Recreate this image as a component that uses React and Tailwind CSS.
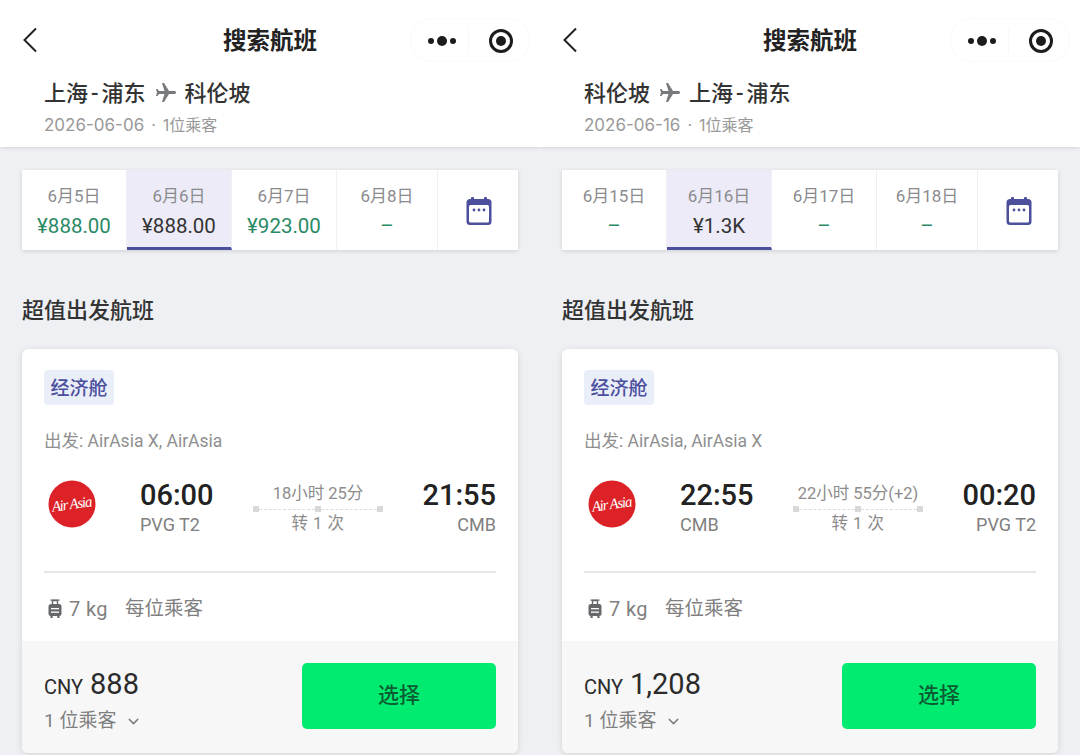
import React from 'react';
import { ChevronDown } from 'lucide-react';

const FONT = "font-['Roboto','Noto_Sans_CJK_SC',sans-serif]";

const panels = [
  {
    from: ['上海', '浦东'],
    to: ['科伦坡'],
    date: '2026-06-06',
    dates: [
      { label: '6月5日', price: '¥888.00', width: 'w-[105px]' },
      { label: '6月6日', price: '¥888.00', width: 'w-[105px]', active: true },
      { label: '6月7日', price: '¥923.00', width: 'w-[105px]' },
      { label: '6月8日', price: '–', width: 'w-[101px]' },
    ],
    carriers: '出发: AirAsia X, AirAsia',
    depart: '06:00',
    departCode: 'PVG T2',
    duration: '18小时 25分',
    arrive: '21:55',
    arriveCode: 'CMB',
    amount: '888',
  },
  {
    from: ['科伦坡'],
    to: ['上海', '浦东'],
    date: '2026-06-16',
    dates: [
      { label: '6月15日', price: '–', width: 'w-[105px]' },
      { label: '6月16日', price: '¥1.3K', width: 'w-[105px]', active: true },
      { label: '6月17日', price: '–', width: 'w-[105px]' },
      { label: '6月18日', price: '–', width: 'w-[101px]' },
    ],
    carriers: '出发: AirAsia, AirAsia X',
    depart: '22:55',
    departCode: 'CMB',
    duration: '22小时 55分(+2)',
    arrive: '00:20',
    arriveCode: 'PVG T2',
    amount: '1,208',
  },
];

const BackIcon = () => (
  <svg width="16" height="26" viewBox="0 0 16 26" fill="none" stroke="#222" strokeWidth="2">
    <path d="M14 1.5 L2.5 13 L14 24.5" />
  </svg>
);

const CapsuleMenu = () => (
  <div className="flex items-center w-[120px] h-[44px] pt-[1px] rounded-full border border-[#fafafa]">
    <div className="flex-1 flex items-center justify-center gap-[3px] pl-[4px]">
      <span className="w-[6px] h-[6px] rounded-full bg-[#1c1c1c]" />
      <span className="w-[10px] h-[10px] rounded-full bg-[#1c1c1c]" />
      <span className="w-[6px] h-[6px] rounded-full bg-[#1c1c1c]" />
    </div>
    <div className="w-px h-[24px] bg-[#f8f8f8]" />
    <div className="w-[60px] pl-[4px] flex items-center justify-center">
      <div className="w-[24px] h-[24px] rounded-full border-[3px] border-[#1c1c1c] flex items-center justify-center">
        <span className="w-[10px] h-[10px] rounded-full bg-[#1c1c1c]" />
      </div>
    </div>
  </div>
);

const PlaneIcon = () => (
  <svg width="24" height="24" viewBox="0 0 24 24" fill="#77797c">
    <path transform="rotate(90 12 12)" d="M21 16v-2l-8-5V3.5c0-.83-.67-1.5-1.5-1.5S10 2.67 10 3.5V9l-8 5v2l8-2.5V19l-2 1.5V22l3.5-1 3.5 1v-1.5L13 19v-5.5l8 2.5z" />
  </svg>
);

const CalendarIcon = () => (
  <svg width="26" height="28" viewBox="0 0 26 28">
    <rect x="5" y="0" width="3" height="5" rx="1" fill="#4b4f9c" />
    <rect x="18" y="0" width="3" height="5" rx="1" fill="#4b4f9c" />
    <rect x="0.5" y="2" width="25" height="26" rx="3.5" fill="#4b4f9c" />
    <rect x="3" y="8" width="20" height="17.5" rx="1.5" fill="#fff" />
    <circle cx="8" cy="13" r="1.4" fill="#4b4f9c" />
    <circle cx="13" cy="13" r="1.4" fill="#4b4f9c" />
    <circle cx="18" cy="13" r="1.4" fill="#4b4f9c" />
  </svg>
);

const AirAsiaLogo = () => (
  <svg width="48" height="48" viewBox="0 0 48 48">
    <circle cx="24" cy="24" r="23.5" fill="#dc2127" />
    <text
      x="24"
      y="29"
      textAnchor="middle"
      fill="#fff"
      fontSize="15"
      fontStyle="italic"
      fontFamily="'Liberation Serif', serif"
      textLength="41"
      transform="rotate(-8 24 24)"
    >
      Air Asia
    </text>
  </svg>
);

const LuggageIcon = () => (
  <svg width="14" height="20" viewBox="0 0 14 20">
    <path d="M4.5 5V1.5h5V5" fill="none" stroke="#66686b" strokeWidth="1.4" />
    <path d="M2.5 1.2h9" stroke="#66686b" strokeWidth="1.2" />
    <rect x="0.5" y="5" width="13" height="12" rx="2.5" fill="#66686b" />
    <rect x="3" y="9" width="8" height="1.3" fill="#fff" />
    <rect x="3" y="12.5" width="8" height="1.3" fill="#fff" />
    <rect x="2.5" y="17" width="2.2" height="2" fill="#66686b" />
    <rect x="9.3" y="17" width="2.2" height="2" fill="#66686b" />
  </svg>
);

// the hyphen in the city names sits wider in the picture than the font draws it
const City = ({ parts }) => (
  <span>
    {parts[0]}
    {parts[1] && <span className="mx-[3px]">-</span>}
    {parts[1]}
  </span>
);

const DateCell = ({ item }) => (
  <div
    className={`${item.width} h-full flex flex-col items-center pt-[14px] border-r border-[#f0f0f2] ${
      item.active ? 'bg-[#ecebf7] border-b-[3px] border-b-[#4c4f9e]' : ''
    }`}
  >
    <div className="text-[17px] leading-[24px] text-[#8b8b8e]">{item.label}</div>
    <div className={`text-[20.5px] leading-[30px] mt-[3px] ${item.active ? 'text-[#333]' : 'text-[#2a8a66]'}`}>
      {item.price}
    </div>
  </div>
);

const Route = ({ duration }) => (
  <div className="w-[130px] mt-[4px] flex flex-col items-center text-[16.5px] text-[#8c8c8c]">
    <div className="leading-[24px] whitespace-nowrap">{duration}</div>
    <div className="w-full flex items-center">
      <span className="w-[6px] h-[6px] bg-[#d8d8d8]" />
      <span className="flex-1 border-t border-dashed border-[#dcdcdc]" />
      <span className="w-[6px] h-[6px] bg-[#d8d8d8]" />
      <span className="flex-1 border-t border-dashed border-[#dcdcdc]" />
      <span className="w-[6px] h-[6px] bg-[#d8d8d8]" />
    </div>
    <div className="leading-[24px] tracking-[0.5px]">转 1 次</div>
  </div>
);

const Panel = ({ data }) => (
  <div className="w-[540px] h-[755px] overflow-hidden bg-[#eef0f4]">
    {/* Header */}
    <div className="h-[147px] bg-white shadow-[0_1px_4px_rgba(0,0,0,0.12)] relative">
      <div className="h-[80px] pt-[18px] pl-[22px] pr-[10px] flex items-start justify-between">
        <div className="w-[108px] h-[44px] flex items-center">
          <BackIcon />
        </div>
        <div className="text-[23.5px] leading-[46px] font-semibold text-[#222]">搜索航班</div>
        <CapsuleMenu />
      </div>
      <div className="pl-[44px] -mt-[4px]">
        <div className="flex items-center h-[34px] text-[22px] font-medium text-[#333]">
          <City parts={data.from} />
          <span className="ml-[8px] mr-[7px] flex">
            <PlaneIcon />
          </span>
          <City parts={data.to} />
        </div>
        <div className="mt-[3px] leading-[24px] text-[16px] text-[#999] font-['Inter','Noto_Sans_CJK_SC',sans-serif]">
          <span className="text-[17px]">{data.date}</span>
          <span className="mx-[7px]">·</span>1位乘客
        </div>
      </div>
    </div>

    {/* Date strip */}
    <div className="mx-[22px] mt-[23px] h-[80px] flex bg-white shadow-[0_1px_4px_rgba(0,0,0,0.14)]">
      {data.dates.map((item) => (
        <DateCell key={item.label} item={item} />
      ))}
      <div className="flex-1 flex items-center justify-center pl-[2px] pt-[1px]">
        <CalendarIcon />
      </div>
    </div>

    <h2 className="mx-[22px] mt-[44px] text-[22px] leading-[34px] font-medium text-[#333]">超值出发航班</h2>

    {/* Flight card */}
    <div className="mx-[22px] mt-[21px] h-[404px] rounded-[6px] overflow-hidden bg-white shadow-[0_1px_6px_rgba(0,0,0,0.12)]">
      <div className="h-[292px] px-[22px] pt-[21px]">
        <div className="w-[70px] h-[35px] pt-[3px] rounded-[4px] bg-[#e9eef9] flex items-center justify-center text-[19px] font-medium text-[#4c4f9e]">
          经济舱
        </div>
        <div className="mt-[24px] text-[17.5px] leading-[24px] text-[#8f8f8f]">{data.carriers}</div>
        <div className="mt-[22px] flex items-center h-[64px]">
          <div className="w-[96px] shrink-0 pl-[4px] -mt-[6px]">
            <AirAsiaLogo />
          </div>
          <div className="flex-1 flex items-center justify-between">
            <div>
              <div className="text-[29px] leading-[36px] font-medium text-[#222]">{data.depart}</div>
              <div className="text-[18px] leading-[24px] text-[#808080]">{data.departCode}</div>
            </div>
            <Route duration={data.duration} />
            <div className="text-right">
              <div className="text-[29px] leading-[36px] font-medium text-[#222]">{data.arrive}</div>
              <div className="text-[18px] leading-[24px] text-[#808080]">{data.arriveCode}</div>
            </div>
          </div>
        </div>
        <div className="mt-[32px] border-t-2 border-[#e6e6e6]" />
        <div className="mt-[22px] flex items-center leading-[28px] text-[#808080]">
          <span className="ml-[4px] mr-[7px] flex">
            <LuggageIcon />
          </span>
          <span className="text-[20px] tracking-[0.4px]">7 kg</span>
          <span className="ml-[17px] text-[19.5px]">每位乘客</span>
        </div>
      </div>
      <div className="h-[112px] bg-[#f7f7f8] px-[22px] pt-[22px] flex justify-between">
        <div>
          <div className="flex items-baseline h-[40px] text-[#2b2b2b]">
            <span className="text-[20px]">CNY</span>
            <span className="text-[29px] ml-[7px]">{data.amount}</span>
          </div>
          <div className="flex items-center mt-[4px] text-[19px] leading-[28px] text-[#808080]">
            1 位乘客
            <ChevronDown className="w-[17px] h-[17px] ml-[9px]" strokeWidth={2} />
          </div>
        </div>
        <div className="w-[194px] h-[66px] rounded-[5px] bg-[#00eb6f] flex items-center justify-center text-[21px] font-medium text-[#0a5c33]">
          选择
        </div>
      </div>
    </div>
  </div>
);

export default function App() {
  return (
    <div className={`w-[1080px] h-[755px] flex overflow-hidden ${FONT}`}>
      {panels.map((panel) => (
        <Panel key={panel.date} data={panel} />
      ))}
    </div>
  );
}
